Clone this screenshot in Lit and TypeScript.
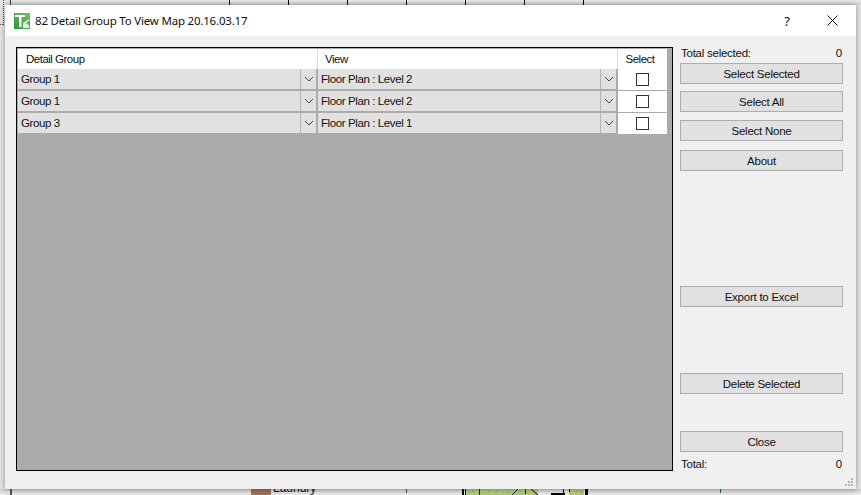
import { LitElement, html, css } from "lit";
import { customElement } from "lit/decorators.js";

const rows = [
  { group: "Group 1", view: "Floor Plan : Level 2" },
  { group: "Group 1", view: "Floor Plan : Level 2" },
  { group: "Group 3", view: "Floor Plan : Level 1" },
];
const ticks = [229, 288, 347, 406, 465, 524, 583];
const greenTicks = [406, 720];

@customElement("app-root")
export class AppRoot extends LitElement {
  static styles = css`
    :host { display: block; width: 861px; height: 495px; position: relative; overflow: hidden; background: #e6e6e6;
      font-family: "Liberation Sans", Arial, sans-serif; font-size: 11.5px; letter-spacing: -0.25px; color: #111; }
    .canvas-top { position: absolute; left: 11px; right: 0; top: 0; height: 5px; background: linear-gradient(#ededed, #d4d4d4); }
    .tick { position: absolute; top: 0; width: 1px; height: 5px; background: #000; }
    .dots { position: absolute; left: 3px; top: 0; height: 25px; width: 0; border-left: 1px dotted #555; }
    .dots2 { position: absolute; left: 0; top: 24px; width: 3px; border-top: 1px dotted #555; }
    .vline { position: absolute; left: 10px; top: 0; width: 1px; height: 5px; background: #444; }
    .vline2 { position: absolute; left: 10px; top: 489px; width: 2px; height: 6px; background: #555; }
    .bottom { position: absolute; left: 0; right: 0; top: 489px; height: 6px; background: linear-gradient(#cfcfcf, #ededed); }
    .brown { position: absolute; left: 251px; width: 20px; background: #a0705c; top: 484px; height: 11px; }
    .laundry { position: absolute; left: 273px; top: 481px; font-size: 12px; letter-spacing: 0; }
    .plan { position: absolute; left: 460px; top: 489px; display: block; }
    .greentick { position: absolute; top: 489px; width: 1px; height: 4px; background: #0a7a0a; }

    .dialog { position: absolute; left: 5px; top: 5px; width: 851px; height: 484px; display: flex; flex-direction: column;
      background: #f0f0f0; box-shadow: 0 0 6px rgba(0,0,0,.4); }
    .titlebar { height: 31px; flex: none; background: #fff; display: flex; align-items: center; padding-left: 9px; }
    .title { margin-left: 5px; font-family: "Noto Sans", sans-serif; font-size: 11.5px; letter-spacing: -0.2px; color: #111; }
    .help { margin-left: auto; font-family: "Noto Sans", sans-serif; font-size: 13px; letter-spacing: 0; width: 14px; text-align: center; margin-right: 33px; }
    .close { margin-right: 18px; display: block; }
    .content { flex: 1; display: flex; padding: 11px 13px 18px 11px; gap: 7px; min-height: 0; }
    .grid { width: 657px; box-sizing: border-box; border: 1px solid #000; background: #ababab; padding: 1px 5px 0 1px; flex: none; }
    .head { display: grid; grid-template-columns: 300px 300px 49px; height: 20px; background: #fff; letter-spacing: -0.5px; }
    .hcell { display: flex; align-items: center; border-right: 1px solid #dcdcdc; box-sizing: border-box; }
    .hcell.a { padding-left: 8px; }
    .hcell.b { padding-left: 7px; }
    .hcell.c { justify-content: center; border-right: 0; padding-right: 5px; }
    .row { display: grid; grid-template-columns: 300px 300px 49px; height: 22px; }
    .combo { height: 20px; width: 298px; box-sizing: border-box; background: #e1e1e1; display: flex; align-items: center; padding-left: 3px; position: relative; letter-spacing: -0.4px; }
    .arrow { position: absolute; right: 0; top: 0; bottom: 0; width: 15px; border-left: 1px solid #b4b4b4; display: flex; align-items: center; justify-content: center; }
    .check { background: #fff; height: 21px; display: flex; align-items: center; justify-content: center; }
    .box { width: 11px; height: 11px; border: 1px solid #333; background: #fff; }
    .side { flex: 1; display: flex; flex-direction: column; }
    .line { display: flex; justify-content: space-between; height: 12px; line-height: 12px; padding-right: 1px; margin-left: 1px; }
    .btn { height: 21px; box-sizing: border-box; width: 163px; border: 1px solid #adadad; background: #e1e1e1; display: flex; align-items: center; justify-content: center; flex: none; }
    .s1 { margin-top: 4px; } .s2 { margin-top: 7px; } .s3 { margin-top: 8px; } .s4 { margin-top: 9px; }
    .s5 { margin-top: 115px; } .s6 { margin-top: 66px; } .s7 { margin-top: 37px; }
    .total { margin-top: 6px; }
    .grip { position: absolute; right: 2px; bottom: 2px; }
  `;

  private chevron() {
    return html`<svg width="10" height="6" viewBox="0 0 10 6"><path d="M1 1l4 4 4-4" fill="none" stroke="#444" stroke-width="1"/></svg>`;
  }

  render() {
    return html`
      <div class="canvas-top"></div>
      ${ticks.map((x) => html`<div class="tick" style="left:${x}px"></div>`)}
      <div class="dots"></div><div class="dots2"></div><div class="vline"></div>
      <div class="bottom"></div><div class="vline2"></div>
      <div class="brown"></div><div class="laundry">Laundry</div>
      <svg class="plan" width="130" height="6" viewBox="0 0 130 6">
        <rect x="2" y="0" width="2" height="6" fill="#000"/>
        <rect x="5" y="0" width="1" height="6" fill="#000"/>
        <rect x="6" y="0" width="72" height="6" fill="#b0c878"/>
        <rect x="109" y="0" width="15" height="6" fill="#b0c878"/>
        <rect x="125" y="0" width="3" height="6" fill="#000"/>
        <rect x="19" y="0" width="1" height="6" fill="#222"/>
        <rect x="65" y="0" width="1" height="5" fill="#222"/>
        <path d="M58 0l-6 6M71 0l7 6" stroke="#111" stroke-width="1" fill="none"/>
        <rect x="91" y="4" width="14" height="2" fill="#000"/>
        <path d="M103.500 0v5M109.500 0v3" stroke="#111" stroke-width="1" fill="none"/>
        <path d="M12 2h1M28 2h1M36 2h1M48 3h1M116 2h1M121 3h1" stroke="#777" stroke-width="1"/>
      </svg>
      ${greenTicks.map((x) => html`<div class="greentick" style="left:${x}px"></div>`)}
      <div class="dialog">
        <div class="titlebar">
          <svg width="16" height="16" viewBox="0 0 16 16">
            <defs><linearGradient id="lg" x1="1" y1="0" x2="0" y2="1"><stop offset="0" stop-color="#74c267"/><stop offset="1" stop-color="#2f9140"/></linearGradient></defs>
            <rect width="16" height="16" fill="url(#lg)"/>
            <path d="M1 2h10v2H7.500v10H5V4H1z" fill="#fff"/>
            <path d="M9 10l6-4v1.500L12 10l3 2.500V15H9z" fill="#eaf4e6"/>
          </svg>
          <span class="title">82 Detail Group To View Map 20.16.03.17</span>
          <span class="help">?</span>
          <svg class="close" width="11" height="11" viewBox="0 0 11 11"><path d="M.5.500l10 10M10.500.500l-10 10" stroke="#111" stroke-width="1" fill="none"/></svg>
        </div>
        <div class="content">
          <div class="grid">
            <div class="head">
              <div class="hcell a">Detail Group</div>
              <div class="hcell b">View</div>
              <div class="hcell c">Select</div>
            </div>
            ${rows.map((r) => html`
              <div class="row">
                <div class="combo">${r.group}<span class="arrow">${this.chevron()}</span></div>
                <div class="combo">${r.view}<span class="arrow">${this.chevron()}</span></div>
                <div class="check"><div class="box"></div></div>
              </div>`)}
          </div>
          <div class="side">
            <div class="line"><span>Total selected:</span><span>0</span></div>
            <div class="btn s1">Select Selected</div>
            <div class="btn s2">Select All</div>
            <div class="btn s3">Select None</div>
            <div class="btn s4">About</div>
            <div class="btn s5">Export to Excel</div>
            <div class="btn s6">Delete Selected</div>
            <div class="btn s7">Close</div>
            <div class="line total"><span>Total:</span><span>0</span></div>
          </div>
        </div>
        <svg class="grip" width="10" height="10" viewBox="0 0 10 10" fill="#b5b5b5">
          <rect x="7" y="1" width="2" height="2"/><rect x="4" y="4" width="2" height="2"/><rect x="7" y="4" width="2" height="2"/>
          <rect x="1" y="7" width="2" height="2"/><rect x="4" y="7" width="2" height="2"/><rect x="7" y="7" width="2" height="2"/>
        </svg>
      </div>
    `;
  }
}
